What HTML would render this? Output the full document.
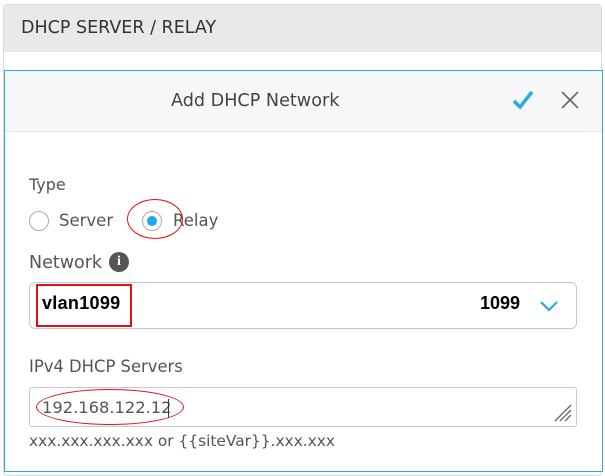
<!DOCTYPE html>
<html><head><style>
body{margin:0;width:605px;height:463px;overflow:hidden;background:#fff;font-family:"DejaVu Sans",sans-serif;position:relative}
.card{position:absolute;left:3px;top:4px;width:597px;height:470px;border:1px solid #d8d9db;border-radius:4px;background:#fff}
.hd{position:absolute;left:4px;top:5px;width:597px;height:47px;background:#e8e9eb;border-radius:4px 4px 0 0}
.hd span{position:absolute;left:17px;top:13px;font-size:17.5px;color:#333}
.modal{position:absolute;left:4px;top:70px;width:597px;height:400px;border:1px solid #29aae2;background:#fff}
.mh{position:absolute;left:0;top:0;width:597px;height:60px;background:#f6f7f9;border-bottom:1px solid #e4e5e7}
.t{position:absolute;color:#555;font-size:16px}
.sel{position:absolute;left:29px;top:282px;width:546px;height:45px;border:1px solid #c8c8c8;border-radius:6px}
.ta{position:absolute;left:29px;top:387px;width:546px;height:38px;border:1px solid #c8c8c8;border-radius:3px}
</style></head><body>
<div class="card"></div>
<div class="hd"><span>DHCP SERVER / RELAY</span></div>
<div class="modal"><div class="mh"></div></div>
<div class="t" style="left:171px;top:91px;color:#444;font-size:17.6px">Add DHCP Network</div>
<svg style="position:absolute;left:511px;top:89px" width="24" height="22"><path d="M3 12 L9 18 L21 3" stroke="#29aae2" stroke-width="3.5" fill="none"/></svg>
<svg style="position:absolute;left:561px;top:91px" width="18" height="18"><path d="M1 1L17 17M17 1L1 17" stroke="#666" stroke-width="1.6"/></svg>
<div class="t" style="left:29px;top:175px">Type</div>
<div style="position:absolute;left:29px;top:211px;width:18px;height:18px;border:1px solid #aaa;border-radius:50%"></div>
<div class="t" style="left:59px;top:211px;font-size:16.5px">Server</div>
<div style="position:absolute;left:142px;top:211px;width:18px;height:18px;border:1px solid #aaa;border-radius:50%"></div>
<div style="position:absolute;left:147px;top:216px;width:10px;height:10px;background:#1ea7f0;border-radius:50%"></div>
<div class="t" style="left:173px;top:211px;font-size:16.5px">Relay</div>
<div style="position:absolute;left:127px;top:199px;width:54px;height:38px;border:1.5px solid #e01010;border-radius:50%"></div>
<div class="t" style="left:29px;top:253px;font-size:17.5px">Network</div>
<div style="position:absolute;left:109px;top:252px;width:20px;height:20px;border-radius:50%;background:#555;color:#fff;font-weight:bold;font-size:14px;text-align:center;line-height:20px;font-family:'Liberation Serif',serif">i</div>
<div class="sel"></div>
<div style="position:absolute;left:36px;top:284px;width:96px;height:43px;border:2px solid #e01010;box-sizing:border-box"></div>
<div style="position:absolute;left:42px;top:293px;font-size:18px;font-weight:bold;color:#000;font-family:'Liberation Sans',sans-serif;letter-spacing:0.3px">vlan1099</div>
<div style="position:absolute;left:480px;top:293px;font-size:18px;font-weight:bold;color:#000;font-family:'Liberation Sans',sans-serif">1099</div>
<svg style="position:absolute;left:539px;top:300px" width="20" height="12"><path d="M2 2L10 10L18 2" stroke="#29aae2" stroke-width="2.2" fill="none"/></svg>
<div class="t" style="left:29px;top:357px;font-size:16.4px">IPv4 DHCP Servers</div>
<div class="ta"></div>
<div class="t" style="left:42px;top:398px;font-size:16.3px">192.168.122.12</div>
<div style="position:absolute;left:168px;top:399px;width:1px;height:19px;background:#333"></div>
<div style="position:absolute;left:36px;top:389px;width:146px;height:34px;border:1.5px solid #e01010;border-radius:50%"></div>
<svg style="position:absolute;left:553px;top:403px" width="20" height="20"><path d="M2 18L18 2M7 18L18 7M12 18L18 12" stroke="#666" stroke-width="1.3"/></svg>
<div class="t" style="left:29px;top:432px;font-size:15.4px">xxx.xxx.xxx.xxx or {{siteVar}}.xxx.xxx</div>
</body></html>
